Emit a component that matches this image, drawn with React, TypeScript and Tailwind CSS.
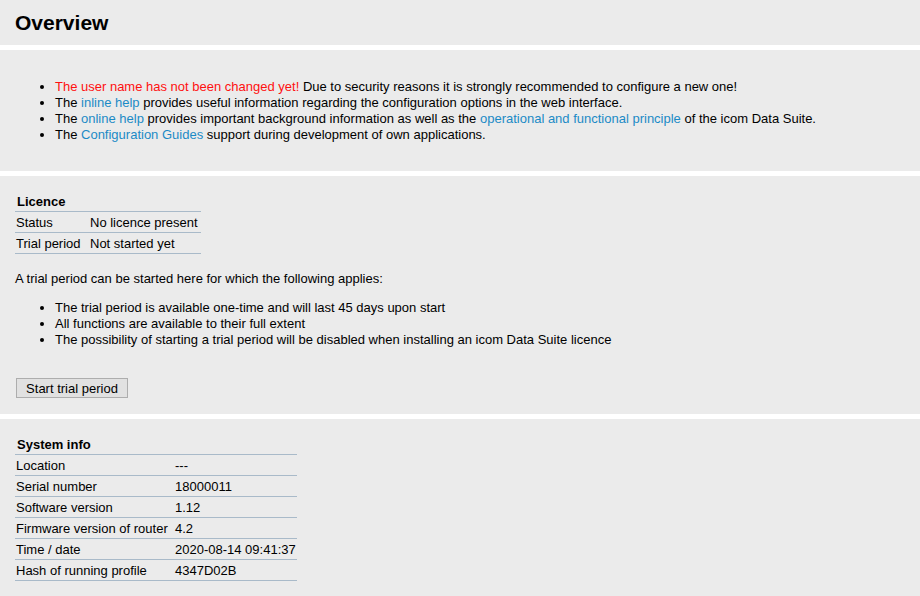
const LICENCE = [
  ["Status", "No licence present"],
  ["Trial period", "Not started yet"],
];

const SYSTEM = [
  ["Location", "---"],
  ["Serial number", "18000011"],
  ["Software version", "1.12"],
  ["Firmware version of router", "4.2"],
  ["Time / date", "2020-08-14 09:41:37"],
  ["Hash of running profile", "4347D02B"],
];

function InfoTable({ title, rows, width, col }: { title: string; rows: string[][]; width: string; col: string }) {
  return (
    <div className={width}>
      <div className="h-[21px] border-b border-[#a9bac9] px-[2px] pt-[3px] font-bold">{title}</div>
      {rows.map(([k, v]) => (
        <div key={k} className="flex h-[21px] border-b border-[#a9bac9] px-[1px] pt-[3px]">
          <span className={col}>{k}</span>
          <span>{v}</span>
        </div>
      ))}
    </div>
  );
}

const link = "text-[#1b8ac6]";

export default function App() {
  return (
    <div
      className="flex min-h-[596px] flex-col gap-[5px] bg-white text-[13px] leading-4 text-black"
      style={{ fontFamily: '"Liberation Sans", Arial, sans-serif' }}
    >
      {/* Header */}
      <div className="flex h-[45px] items-center bg-[#ebebeb] px-[15px]">
        <h1 className="text-[21px] font-bold leading-none">Overview</h1>
      </div>

      {/* Notes */}
      <div className="h-[121px] bg-[#ebebeb] px-[15px] pt-[29px]">
        <ul className="list-disc pl-[40px]">
          <li>
            <span className="text-[#ff1010]">The user name has not been changed yet!</span> Due to security reasons it
            is strongly recommended to configure a new one!
          </li>
          <li>
            The <span className={link}>inline help</span> provides useful information regarding the configuration
            options in the web interface.
          </li>
          <li>
            The <span className={link}>online help</span> provides important background information as well as the{" "}
            <span className={link}>operational and functional principle</span> of the icom Data Suite.
          </li>
          <li>
            The <span className={link}>Configuration Guides</span> support during development of own applications.
          </li>
        </ul>
      </div>

      {/* Licence */}
      <div className="h-[238px] bg-[#ebebeb] px-[15px] pt-[15px]">
        <InfoTable title="Licence" rows={LICENCE} width="w-[186px]" col="w-[74px]" />
        <p className="mt-[17px]">A trial period can be started here for which the following applies:</p>
        <ul className="mt-[13px] list-disc pl-[40px]">
          <li>The trial period is available one-time and will last 45 days upon start</li>
          <li>All functions are available to their full extent</li>
          <li>The possibility of starting a trial period will be disabled when installing an icom Data Suite licence</li>
        </ul>
        <button
          type="button"
          className="ml-[1px] mt-[30px] h-[20px] w-[112px] border border-[#adadad] bg-[#e1e1e1] pt-[1px] text-center leading-[17px]"
        >
          Start trial period
        </button>
      </div>

      {/* System info */}
      <div className="flex-1 bg-[#ebebeb] px-[15px] pt-[15px]">
        <InfoTable title="System info" rows={SYSTEM} width="w-[282px]" col="w-[159px]" />
      </div>
    </div>
  );
}
